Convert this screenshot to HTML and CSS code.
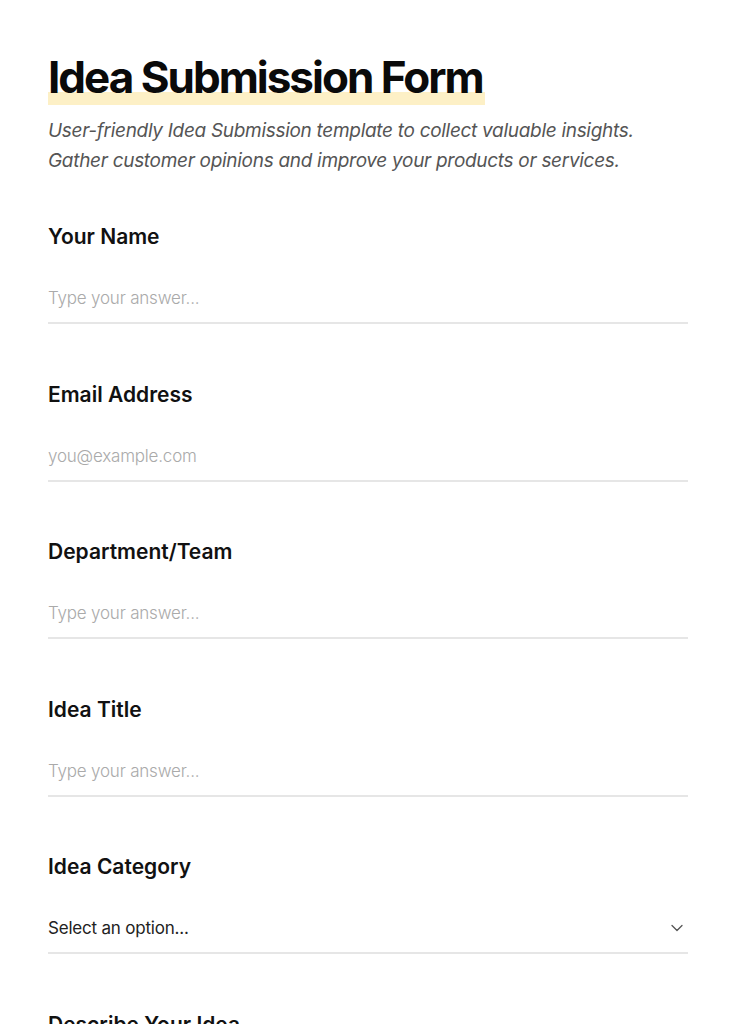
FILE: index.html
```html
<!DOCTYPE html>
<html>
<head>
<meta charset="utf-8">
<link rel="stylesheet" href="styles.css">
</head>
<body>
<main class="form">
  <header class="head">
    <h1 class="title"><span class="mark">Idea Submission Form</span></h1>
    <p class="subtitle">User-friendly Idea Submission template to collect valuable insights. Gather customer opinions and improve your products or services.</p>
  </header>
  <div class="field">
    <label class="label">Your Name</label>
    <div class="input placeholder">Type your answer...</div>
  </div>
  <div class="field">
    <label class="label">Email Address</label>
    <div class="input placeholder">you@example.com</div>
  </div>
  <div class="field">
    <label class="label">Department/Team</label>
    <div class="input placeholder">Type your answer...</div>
  </div>
  <div class="field">
    <label class="label">Idea Title</label>
    <div class="input placeholder">Type your answer...</div>
  </div>
  <div class="field">
    <label class="label">Idea Category</label>
    <div class="input select">
      <span>Select an option...</span>
      <svg class="chev" width="14" height="14" viewBox="0 0 14 14"><path d="M2 4.5 L7 9.5 L12 4.5" fill="none" stroke="#555" stroke-width="1.3" stroke-linecap="round" stroke-linejoin="round"/></svg>
    </div>
  </div>
  <div class="field">
    <label class="label">Describe Your Idea</label>
    <div class="input placeholder">Type your answer...</div>
  </div>
</main>
</body>
</html>
```
FILE: styles.css
```css
html, body { margin: 0; padding: 0; background: #fff; }
body {
  font-family: "Inter", "Noto Sans", sans-serif;
  color: #111;
  overflow: hidden;
  height: 1024px;
}
.form {
  padding: 52px 48px 0 48px;
  width: 640px;
}
.head { margin-bottom: 47px; }
.title {
  margin: 0;
  font-size: 44px;
  font-weight: 700;
  letter-spacing: -2px;
  line-height: 50px;
  color: #0a0a0a;
}
.mark {
  display: inline-block;
  height: 50px;
  padding-bottom: 3px;
  padding-right: 2px;
  background: linear-gradient(to bottom, transparent 0, transparent 40px, #fdf0c6 40px, #fdf0c6 53px);
}
.subtitle {
  margin: 11px 0 0 0;
  font-size: 19px;
  line-height: 30px;
  font-style: italic;
  color: #555;
  letter-spacing: -0.3px;
}
.field {
  display: flex;
  flex-direction: column;
  height: 157.5px;
}
.label {
  font-size: 21px;
  font-weight: 600;
  line-height: 28px;
  letter-spacing: 0;
  color: #111;
}
.input {
  margin-top: 33px;
  height: 28px;
  line-height: 28px;
  font-size: 17px;
  padding-bottom: 10px;
  border-bottom: 2px solid #e6e6e6;
  letter-spacing: -0.2px;
}
.placeholder { color: #aaa; font-weight: 300; }
.select {
  display: flex;
  justify-content: space-between;
  align-items: center;
  color: #222;
}
.chev { margin-right: 4px; }
```
